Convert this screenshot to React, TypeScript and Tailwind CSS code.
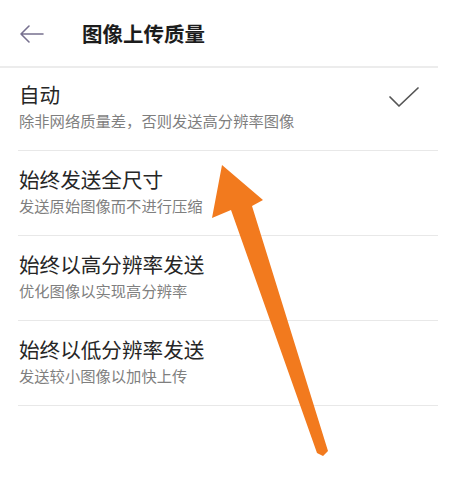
const options = [
  { title: "自动", desc: "除非网络质量差，否则发送高分辨率图像", selected: true },
  { title: "始终发送全尺寸", desc: "发送原始图像而不进行压缩", selected: false },
  { title: "始终以高分辨率发送", desc: "优化图像以实现高分辨率", selected: false },
  { title: "始终以低分辨率发送", desc: "发送较小图像以加快上传", selected: false },
];

export default function App() {
  return (
    <div
      className="relative w-[458px] h-[495px] bg-white overflow-hidden"
      style={{ fontFamily: '"Noto Sans CJK SC", "Noto Sans", sans-serif' }}
    >
      {/* Header */}
      <div className="w-[438px] h-[68px] flex items-center border-b-2 border-[#ececec]">
        <svg width="26" height="20" viewBox="0 0 26 20" className="ml-[19px] mt-[2px]">
          <path d="M24 10H2M10 2L2 10l8 8" fill="none" stroke="#77708f" strokeWidth="1.6" strokeLinecap="round" strokeLinejoin="round" />
        </svg>
        <h1 className="ml-[37px] text-[20.5px] leading-[28px] font-bold text-[#1c1c1c]">图像上传质量</h1>
      </div>

      {/* Options */}
      <div className="ml-[18px] w-[420px]">
        {options.map((o, i) => (
          <div
            key={o.title}
            className={`flex items-start justify-between border-b border-[#e8e8e8] pb-[20px] ${i === 0 ? "pt-[13px]" : "pt-[15px]"}`}
          >
            <div className="pl-[1px]">
              <div className="text-[20.6px] leading-[26px] text-[#262626]">{o.title}</div>
              <div className="mt-[3px] text-[15.3px] leading-[20px] text-[#7f7f7f]">{o.desc}</div>
            </div>
            {o.selected && (
              <svg width="32" height="22" viewBox="0 0 32 22" className="mr-[18px] mt-[5px]">
                <path d="M2 11l9 9L30 2" fill="none" stroke="#555555" strokeWidth="1.7" strokeLinecap="round" strokeLinejoin="round" />
              </svg>
            )}
          </div>
        ))}
      </div>

      {/* Orange annotation arrow */}
      <svg className="absolute left-0 top-0 pointer-events-none" width="458" height="495" viewBox="0 0 458 495">
        <polygon
          points="222,165 263,200 252,206 328,451 323,456 317,453 231,210 212,218"
          fill="#f27a1e"
          strokeLinejoin="round"
        />
      </svg>
    </div>
  );
}
